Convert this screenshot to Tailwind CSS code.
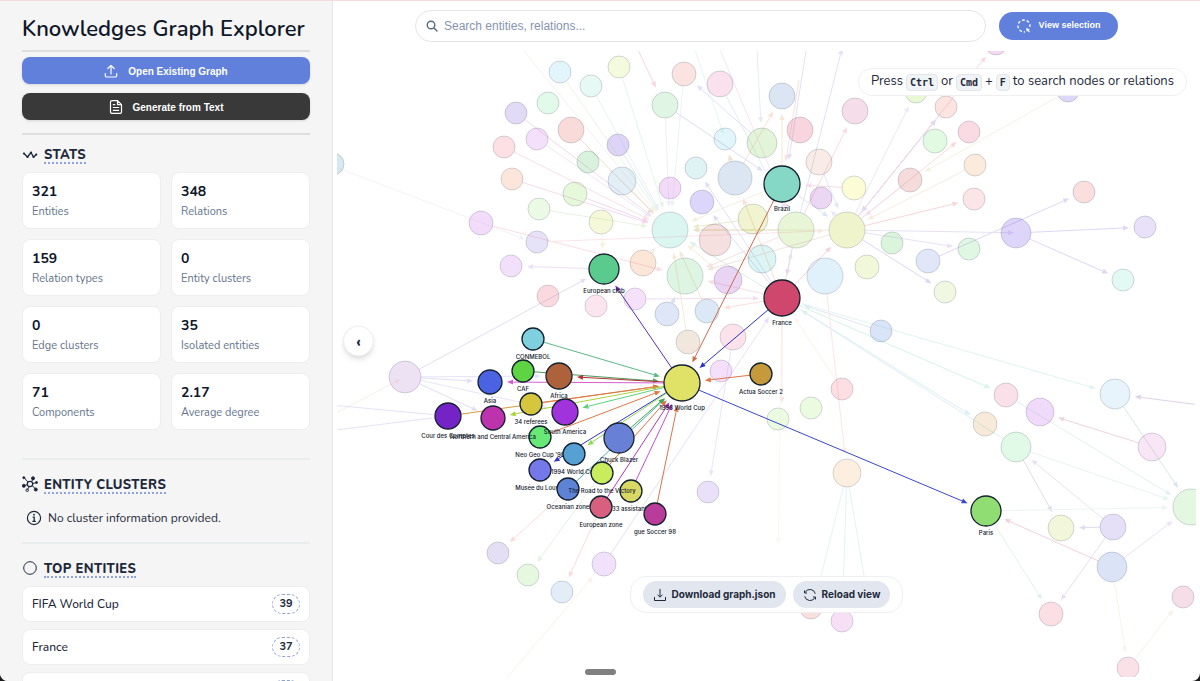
<!DOCTYPE html>
<html lang="en">
<head>
<meta charset="utf-8">
<title>Knowledges Graph Explorer</title>
<script src="https://cdn.jsdelivr.net/npm/@tailwindcss/browser@4"></script>
</head>
<body class="bg-[#1c1c1c]">
<div class="flex h-screen overflow-hidden rounded-b-lg border-t border-[#f3dcdf] bg-white font-['Nunito','Lato',sans-serif] text-[#1e293b]">

  <aside class="w-[333px] shrink-0 overflow-hidden border-r border-[#e6e6e8] bg-[#f5f5f5] px-[22px] pt-3">
    <h1 class="text-[22px] font-semibold leading-8 whitespace-nowrap text-[#0f172a]">Knowledges Graph Explorer</h1>
    <div class="mt-[5px] border-t-2 border-[#dededf]"></div>
    <div class="mt-[5px] flex flex-col gap-[9px] font-['Liberation_Sans',Arial,sans-serif] text-[10px] font-bold text-white">
      <button type="button" class="flex h-[27px] items-center justify-center gap-[10px] rounded-lg bg-[#6080db] pt-px shadow">
        <svg class="size-[14px]" viewBox="1 1 14 14" fill="none" stroke="currentColor" stroke-width="1.2" stroke-linecap="round" stroke-linejoin="round"><path d="M8 11V2.500M4.800 5.500L8 2.300l3.200 3.200M2.300 10.500v2a1.500 1.500 0 0 0 1.500 1.500h8.400a1.500 1.500 0 0 0 1.500-1.500v-2"/></svg>
        Open Existing Graph
      </button>
      <button type="button" class="flex h-[27px] items-center justify-center gap-[10px] rounded-lg bg-[#393939] pt-px shadow">
        <svg class="size-[14px]" viewBox="1 1 14 14" fill="none" stroke="currentColor" stroke-width="1.200" stroke-linecap="round" stroke-linejoin="round"><path d="M9.500 1.600H4A1.500 1.500 0 0 0 2.500 3.100v9.800A1.500 1.500 0 0 0 4 14.400h8a1.500 1.500 0 0 0 1.500-1.500V5.600zM9.500 1.600v4h4M5.300 5.700h1.500M5.300 8.500h5.400M5.300 11.300h5.400"/></svg>
        Generate from Text
      </button>
    </div>
    <div class="mt-[13px] border-t-2 border-[#dededf]"></div>

    <section class="mt-[9px]">
      <h2 class="flex h-5 items-center gap-[6px] text-[13px] font-extrabold">
        <svg class="size-4" viewBox="0 0 16 16" fill="none" stroke="currentColor" stroke-width="1.400" stroke-linecap="round" stroke-linejoin="round"><path d="M2 7.500L5.500 11 9 6.500 11.500 11 14.300 8.500"/><g fill="currentColor" stroke="none"><circle cx="2" cy="7.500" r="1.100"/><circle cx="5.500" cy="11" r="1.100"/><circle cx="9" cy="6.500" r="1.100"/><circle cx="11.500" cy="11" r="1.100"/><circle cx="14.300" cy="8.500" r="1.100"/></g></svg>
        <span class="border-b-2 border-dotted border-[#8fa3dc] pt-[3px] leading-[14px] tracking-wide">STATS</span>
      </h2>
      <dl class="mt-2 grid grid-cols-2 gap-[10px]">
        <div class="flex h-[57px] flex-col justify-center rounded-lg border border-[#eeeef0] bg-white px-[9px] pt-[2px]"><dd class="text-sm leading-5 font-bold text-[#0f172a]">321</dd><dt class="text-[11px] leading-5 text-[#64748b]">Entities</dt></div>
        <div class="flex h-[57px] flex-col justify-center rounded-lg border border-[#eeeef0] bg-white px-[9px] pt-[2px]"><dd class="text-sm leading-5 font-bold text-[#0f172a]">348</dd><dt class="text-[11px] leading-5 text-[#64748b]">Relations</dt></div>
        <div class="flex h-[57px] flex-col justify-center rounded-lg border border-[#eeeef0] bg-white px-[9px] pt-[2px]"><dd class="text-sm leading-5 font-bold text-[#0f172a]">159</dd><dt class="text-[11px] leading-5 text-[#64748b]">Relation types</dt></div>
        <div class="flex h-[57px] flex-col justify-center rounded-lg border border-[#eeeef0] bg-white px-[9px] pt-[2px]"><dd class="text-sm leading-5 font-bold text-[#0f172a]">0</dd><dt class="text-[11px] leading-5 text-[#64748b]">Entity clusters</dt></div>
        <div class="flex h-[57px] flex-col justify-center rounded-lg border border-[#eeeef0] bg-white px-[9px] pt-[2px]"><dd class="text-sm leading-5 font-bold text-[#0f172a]">0</dd><dt class="text-[11px] leading-5 text-[#64748b]">Edge clusters</dt></div>
        <div class="flex h-[57px] flex-col justify-center rounded-lg border border-[#eeeef0] bg-white px-[9px] pt-[2px]"><dd class="text-sm leading-5 font-bold text-[#0f172a]">35</dd><dt class="text-[11px] leading-5 text-[#64748b]">Isolated entities</dt></div>
        <div class="flex h-[57px] flex-col justify-center rounded-lg border border-[#eeeef0] bg-white px-[9px] pt-[2px]"><dd class="text-sm leading-5 font-bold text-[#0f172a]">71</dd><dt class="text-[11px] leading-5 text-[#64748b]">Components</dt></div>
        <div class="flex h-[57px] flex-col justify-center rounded-lg border border-[#eeeef0] bg-white px-[9px] pt-[2px]"><dd class="text-sm leading-5 font-bold text-[#0f172a]">2.17</dd><dt class="text-[11px] leading-5 text-[#64748b]">Average degree</dt></div>
      </dl>
    </section>

    <section class="mt-7 border-t-2 border-[#e9edee] pt-[14px]">
      <h2 class="flex h-5 items-center gap-[6px] text-[13px] font-extrabold">
        <svg class="size-4" viewBox="0 0 16 16" fill="currentColor" stroke="currentColor" stroke-width="1"><circle cx="8" cy="8" r="2.700" fill="none" stroke-width="1.200"/><path d="M6 6L2 1.500M9.500 5.700L11 3M10.700 7.500l4-1M10.300 9.500l3.500 4M7.200 10.600L5.500 13.500M5.400 8.500L2 9.800" fill="none"/><circle cx="1.800" cy="1.700" r="1"/><circle cx="11" cy="2.300" r="1.500"/><circle cx="14.500" cy="6.500" r="1"/><circle cx="13.800" cy="13.500" r="1.500"/><circle cx="5.200" cy="14.200" r="1.300" fill="none"/><circle cx="1.800" cy="9.800" r="1.500"/></svg>
        <span class="border-b-2 border-dotted border-[#8fa3dc] pt-[3px] leading-[14px] tracking-wide">ENTITY CLUSTERS</span>
      </h2>
      <p class="mt-3 flex h-6 items-center gap-[6px] pl-1 text-xs">
        <svg class="size-4" viewBox="0 0 16 16" fill="none" stroke="currentColor" stroke-width="1.200"><circle cx="8" cy="8" r="6.600"/><path d="M6.600 7.200h1.600v4M6.400 11.300h3.400" stroke-width="1.300"/><circle cx="8" cy="4.700" r=".9" fill="currentColor" stroke="none"/></svg>
        No cluster information provided.
      </p>
    </section>

    <section class="mt-3 border-t-2 border-[#e9edee] pt-[14px]">
      <h2 class="flex h-5 items-center gap-[6px] text-[13px] font-extrabold">
        <svg class="size-4" viewBox="0 0 16 16" fill="none" stroke="currentColor" stroke-width="1"><circle cx="8" cy="8" r="6.300"/></svg>
        <span class="border-b-2 border-dotted border-[#8fa3dc] pt-[3px] leading-[14px] tracking-wide">TOP ENTITIES</span>
      </h2>
      <ul class="mt-2 flex flex-col gap-[7px] text-xs font-medium">
        <li class="flex h-9 shrink-0 items-center justify-between rounded-lg border border-[#eeeef0] bg-white px-[9px]">FIFA World Cup <span class="flex h-5 w-7 items-center justify-center rounded-full border border-dashed border-[#8fa3cc] text-[11px] font-bold">39</span></li>
        <li class="flex h-9 shrink-0 items-center justify-between rounded-lg border border-[#eeeef0] bg-white px-[9px]">France <span class="flex h-5 w-7 items-center justify-center rounded-full border border-dashed border-[#8fa3cc] text-[11px] font-bold">37</span></li>
        <li class="flex h-9 shrink-0 items-center justify-between rounded-lg border border-[#eeeef0] bg-white px-[9px]">Brazil <span class="flex h-5 w-7 items-center justify-center rounded-full border border-dashed border-[#8fa3cc] text-[11px] font-bold">30</span></li>
      </ul>
    </section>
  </aside>

  <main class="relative flex min-w-0 flex-1 flex-col justify-between">
    <svg class="absolute inset-0 size-full font-['Inter',sans-serif] text-[6px] font-medium" viewBox="333 1 867 680" role="img" aria-label="Entity graph">
      <clipPath id="stage"><rect x="337" y="51" width="859" height="626"/></clipPath>
      <g clip-path="url(#stage)">
        <g id="faint-nodes" stroke="#334155" stroke-opacity=".2" fill-opacity=".85"></g>
        <g id="faint-edges" opacity=".2"></g>
        <g id="edges"></g>
        <g id="nodes" fill="#0f172a" text-anchor="middle"></g>
      </g>
    </svg>

    <div class="relative flex h-[50px] items-center justify-center gap-[13px]">
      <label class="flex h-8 w-[571px] items-center gap-[6px] rounded-full border border-[#e5e5e8] bg-white px-[10px]">
        <svg class="size-3 shrink-0 text-[#5b6b82]" viewBox="0 0 12 12" fill="none" stroke="currentColor" stroke-width="1.400" stroke-linecap="round"><circle cx="5" cy="5" r="3.800"/><path d="M8 8l3 3"/></svg>
        <input type="search" aria-label="Search" placeholder="Search entities, relations..." class="min-w-0 flex-1 font-['Liberation_Sans',Arial,sans-serif] text-xs outline-none placeholder:text-[#8594b0]">
      </label>
      <button type="button" class="flex h-7 w-[119px] items-center justify-center gap-2 rounded-full bg-[#6080db] font-['Liberation_Sans',Arial,sans-serif] text-[9px] font-bold whitespace-nowrap text-white">
        <svg class="size-[14px] shrink-0" viewBox="0 0 14 14" fill="none" stroke="currentColor" stroke-width="1.300"><path d="M12.900 8A6 6 0 1 0 8 12.900" stroke-dasharray="2.800 2"/><path d="M9 9l4 1.300-1.600.7 1.600 1.700-.7.700-1.700-1.700-.7 1.400z" fill="currentColor" stroke="none"/></svg>
        View selection
      </button>
    </div>

    <p class="absolute top-[67px] right-[13px] flex h-7 items-center gap-[3px] rounded-full border border-[#efeff2] bg-white/95 px-3 text-[13px] whitespace-nowrap">
      Press
      <kbd class="rounded border border-[#e2e5ea] bg-[#f1f4f7] px-[3px] font-['DejaVu_Sans_Mono',monospace] text-[10px] leading-[15px] font-bold">Ctrl</kbd>
      or
      <kbd class="rounded border border-[#e2e5ea] bg-[#f1f4f7] px-[3px] font-['DejaVu_Sans_Mono',monospace] text-[10px] leading-[15px] font-bold">Cmd</kbd>
      +
      <kbd class="rounded border border-[#e2e5ea] bg-[#f1f4f7] px-[3px] font-['DejaVu_Sans_Mono',monospace] text-[10px] leading-[15px] font-bold">F</kbd>
      to search nodes or relations
    </p>

    <button type="button" aria-label="Collapse sidebar" class="absolute top-1/2 left-[10px] flex size-[31px] -translate-y-1/2 items-center justify-center rounded-full border border-[#ededf0] bg-white text-base font-extrabold shadow-md">‹</button>

    <div class="relative flex flex-col items-center">
      <div class="flex h-[37px] items-center gap-[7px] rounded-2xl border border-[#efeff2] bg-white/90 px-3 font-['Inter',sans-serif] text-[10px] font-bold text-[#1e293b]">
        <button type="button" class="flex h-[27px] items-center gap-[5px] rounded-full bg-[#e2e6ee] px-[10px]">
          <svg class="size-[14px]" viewBox="0 0 14 14" fill="none" stroke="currentColor"><path d="M7 1v8M4.500 6.700L7 9.200l2.500-2.500M1.500 9v3.500h11V9"/></svg>
          Download graph.json
        </button>
        <button type="button" class="flex h-[27px] items-center gap-[5px] rounded-full bg-[#e2e6ee] px-[10px]">
          <svg class="size-[14px]" viewBox="0 0 14 14" fill="none" stroke="currentColor"><path d="M2 4.500A5.500 5.500 0 0 1 12.300 5.700M12 9.500A5.500 5.500 0 0 1 1.700 8.300M1.500 2.500v2.500h2.500M12.500 11.500V9H10"/></svg>
          Reload view
        </button>
      </div>
      <div class="mt-14 mr-[333px] mb-[6px] h-[6px] w-[31px] rounded-full bg-[#808080]"></div>
    </div>
  </main>
</div>

<script>
const NS = 'http://www.w3.org/2000/svg';
const layer = id => document.getElementById(id);
function add(parent, tag, attrs, text) {
  const el = document.createElementNS(NS, tag);
  for (const key in attrs) el.setAttribute(key, attrs[key]);
  if (text) el.textContent = text;
  parent.appendChild(el);
}
// Draws a line between two [x, y, radius] points, with an arrowhead short of the target.
function edge(parent, a, b, color) {
  const dx = b[0] - a[0], dy = b[1] - a[1], d = Math.hypot(dx, dy), ux = dx / d, uy = dy / d;
  const tx = b[0] - ux * (b[2] + 5), ty = b[1] - uy * (b[2] + 5);
  const bx = tx - ux * 6, by = ty - uy * 6;
  add(parent, 'path', { d: `M${a[0] + ux * a[2]} ${a[1] + uy * a[2]}L${bx} ${by}`, stroke: color });
  add(parent, 'path', { d: `M${tx} ${ty}L${bx - uy * 2.5} ${by + ux * 2.5}L${bx + uy * 2.5} ${by - ux * 2.5}Z`, fill: color });
}

// x, y, radius, fill
const faint = [
  [560,72,11,'#def5fb'],[591,86,11,'#e2f8f4'],[619,67,11,'#f1fad8'],[548,103,11,'#ddf9e5'],[516,113,11,'#ddd5f5'],[504,147,11,'#fbdadf'],
  [537,139,11,'#f3dafb'],[571,130,13,'#f8d5d2'],[512,179,11,'#fbe3d5'],[588,162,11,'#d2f0d8'],[618,145,11,'#d8cdf7'],[575,194,12,'#e1f7d4'],
  [539,209,11,'#e7f9e0'],[622,181,14,'#deecf6'],[601,222,12,'#f3f8d2'],[481,223,12,'#f0d7f8'],[537,242,11,'#e3def8'],[511,266,11,'#f0dafa'],
  [548,296,11,'#f9d4d9'],[596,306,11,'#fbe0ec'],[635,299,11,'#f5dcfa'],[665,105,13,'#daf3df'],[684,74,12,'#fadedd'],[720,84,13,'#f8dcea'],
  [782,96,13,'#d5e0f1'],[696,168,11,'#d9f1f2'],[725,139,11,'#dcf4fa'],[762,143,15,'#def3d2'],[670,188,11,'#f2d3f8'],[702,202,12,'#d6d0fa'],
  [735,178,17,'#d6e1f0'],[670,230,18,'#d5f5ed'],[715,240,16,'#f5dad9'],[753,219,15,'#eff2c8'],[796,230,18,'#e5f4d1'],[762,259,14,'#d6f3f2'],
  [643,263,13,'#fce2d0'],[685,276,18,'#d8f3de'],[728,280,14,'#e5cdf2'],[667,314,12,'#d9e2f7'],[707,311,12,'#d5e5f5'],[688,342,12,'#f0e3d7'],
  [733,337,13,'#fadde8'],[721,371,11,'#f3d9fa'],[800,130,13,'#f8cfd9'],[855,111,13,'#f5d8e5'],[819,162,13,'#f8e9e1'],[821,198,11,'#e9d0f1'],
  [854,188,12,'#fcfcd1'],[847,230,18,'#eff2c5'],[825,276,18,'#dbeffa'],[867,267,12,'#eff7d4'],[892,243,11,'#d5f5d7'],[910,180,12,'#f3d6d5'],
  [946,107,11,'#fbe0dc'],[935,141,12,'#dcfadc'],[969,132,11,'#f9d5df'],[975,165,11,'#f9e8d6'],[974,199,11,'#fbe0e3'],[916,92,11,'#e5f7ce'],
  [996,44,11,'#f3d2ee'],[1068,91,11,'#d8d1f7'],[1084,192,11,'#f9d9d8'],[1016,233,15,'#d8cef9'],[1145,227,11,'#e4dcf8'],[1123,280,11,'#ddf8f2'],
  [928,261,12,'#dce2f8'],[969,249,11,'#dbf6df'],[945,292,11,'#edf7dd'],[881,331,11,'#d3dff7'],[842,389,11,'#fbd8de'],[811,408,11,'#e6fadb'],
  [778,419,11,'#e8fadd'],[847,473,14,'#fcecdb'],[1006,395,12,'#f9dbe5'],[1040,412,14,'#edd4f8'],[985,424,12,'#f6e6d4'],[1016,447,15,'#dbf9e3'],
  [1115,394,15,'#e4f2fc'],[1152,447,14,'#f7e0f5'],[1191,507,18,'#def6dc'],[1061,528,13,'#f0f5d4'],[1113,527,13,'#e1daf6'],[1112,567,15,'#d5def5'],
  [1051,614,12,'#fbd9df'],[1183,597,11,'#f5d8e5'],[1128,668,11,'#f9dce3'],[708,492,11,'#e6daf8'],[498,553,11,'#dfd9f0'],[528,575,11,'#e2f8db'],
  [562,592,11,'#ddeaf7'],[604,564,12,'#f0dcf9'],[405,377,16,'#eadcf2'],[333,164,11,'#cfe5ef'],[811,608,11,'#f8d9d7'],[842,621,11,'#f6daf3']
];
faint.forEach(([cx, cy, r, fill]) => add(layer('faint-nodes'), 'circle', { cx, cy, r, fill }));

const hubA = [670,230,18], hubB = [847,230,18], hubC = [796,230,18], brazil = [782,184,18], france = [782,298,18], hubD = [685,276,18];
const web = [
  [[516,113,11],hubA,'#a58'],[[504,147,11],hubA,'#d67'],[[512,179,11],hubA,'#b4a'],[[537,139,11],hubA,'#a8c'],[[571,130,13],hubA,'#940'],
  [[575,194,12],hubA,'#b3a'],[[539,209,11],hubA,'#8b6'],[[618,145,11],hubA,'#79c'],[[591,86,11],hubA,'#7bc'],[[619,67,11],hubA,'#7c9'],
  [[560,72,11],hubA,'#8c7'],[[665,105,13],hubA,'#aad'],[[684,74,12],hubA,'#9bd'],[[622,181,14],hubA,'#960'],[[481,223,12],hubD,'#e57'],
  [[537,242,11],hubB,'#e79'],[[601,222,12],[604,269,15],'#cb5'],[[643,263,13],hubA,'#ca6'],[brazil,hubA,'#ca5'],[hubB,hubA,'#9a3'],
  [hubC,hubA,'#960'],[[753,219,15],hubA,'#890'],[france,hubA,'#5a8'],[france,[702,202,12],'#55c'],[[728,280,14],hubA,'#ca4'],
  [[707,311,12],hubA,'#b93'],[[688,342,12],hubA,'#c94'],[france,hubD,'#d66'],[hubC,hubD,'#c76'],[hubB,hubD,'#b76'],
  [france,[707,311,12],'#e65'],[[635,299,11],france,'#c5b'],[france,hubB,'#d24'],[france,hubC,'#6b5'],[hubC,france,'#93c'],
  [[720,84,13],hubC,'#69c'],[[762,143,15],[684,74,12],'#66d'],[[665,105,13],brazil,'#55c'],[[735,178,17],[725,139,11],'#a60'],
  [[735,178,17],[782,96,13],'#d63'],[brazil,[782,96,13],'#d82'],[france,[696,168,11],'#66c'],[france,[735,178,17],'#d62'],
  [brazil,hubB,'#57c'],[hubB,[821,198,11],'#98c'],[[819,162,13],hubB,'#68c'],[[854,188,12],brazil,'#d48'],[[796,230,18],[855,111,13],'#d46'],
  [hubB,[946,107,11],'#42c'],[[946,107,11],hubB,'#42c'],[hubB,[969,132,11],'#d44'],[[910,180,12],hubB,'#b5a'],[[975,165,11],hubB,'#d95'],
  [hubB,[974,199,11],'#d33'],[hubB,[916,92,11],'#98d'],[hubB,[996,44,11],'#d47'],[[1068,91,11],[910,180,12],'#cb6'],[hubC,[846,33,11],'#76c'],
  [hubB,[969,249,11],'#96c'],[hubB,[945,292,11],'#63c'],[[928,261,12],[1084,192,11],'#63c'],[[1016,233,15],[1145,227,11],'#63c'],[[1016,233,15],[1123,280,11],'#63c'],
  [hubB,[1030,233,11],'#86c'],[[881,331,11],france,'#68c'],[[1016,447,15],france,'#5ba'],[france,[1006,395,12],'#3c8'],[france,[985,424,12],'#5ad'],
  [[782,298,18],[1115,394,15],'#6cb'],[france,[778,560,11],'#eda'],[france,[782,419,11],'#d88'],[[825,276,18],[847,473,14],'#e88'],[[842,389,11],france,'#ec9'],
  [[1200,405,5],[1115,394,15],'#628'],[[1152,447,14],[1040,412,14],'#a36'],[[1115,394,15],[1191,507,18],'#48a'],[[1006,395,12],[1191,507,18],'#6bc'],
  [[1016,447,15],[1191,507,18],'#8cb'],[[1016,447,15],[1061,528,13],'#658'],[[1113,527,13],[1061,528,13],'#75b'],[[1113,527,13],[1016,447,15],'#87c'],
  [[1113,527,13],[1051,614,12],'#86a'],[[1112,567,15],[1191,507,18],'#a7c'],[[1112,567,15],[986,511,15],'#b25'],[[986,511,15],[1191,507,18],'#acc'],
  [[986,511,15],[1051,614,12],'#7b9'],[[1128,668,11],[1183,597,11],'#db8'],[[1112,567,15],[1128,668,11],'#dc9'],[[733,337,13],[708,492,11],'#88d'],
  [[604,564,12],france,'#96d'],[[505,680,5],[604,564,12],'#eb9'],[[568,489,11],[498,553,11],'#e55'],[[602,473,11],[528,575,11],'#8b8'],[[601,507,11],[562,592,11],'#d55'],
  [[667,314,12],hubD,'#55b'],[[405,377,16],[604,269,15],'#66b'],[[405,377,16],[490,382,12],'#66d'],[[405,377,16],[559,376,13],'#77d'],[[405,377,16],[493,418,12],'#66c'],
  [[405,377,16],[565,412,13],'#88d'],[[330,416,0],[405,377,0],'#ea8'],[[448,416,13],[320,404,0],'#77d'],[[448,416,13],[320,432,0],'#77d'],[[604,269,15],[511,266,11],'#a6c'],
  [[330,165,0],[540,245,11],'#bbd'],[[847,473,14],[815,600,11],'#7cb'],[[847,473,14],[842,621,11],'#7cb'],[[847,473,14],[868,600,11],'#7cb'],
  [[638,50,0],[658,92,0],'#c35'],[[524,51,0],hubA,'#cb9'],[[695,50,0],[725,139,0],'#8cc'],[[720,50,0],hubC,'#c7b'],[[757,50,0],[762,143,15],'#79d'],[[799,80,0],brazil,'#d66'],[[806,51,0],[788,165,0],'#66c']
];
web.forEach(([a, b, c]) => edge(layer('faint-edges'), a, b, c));

const cup = [682,383,18];
const strong = [
  [[533,339,11],cup,'#5cb888'],[[523,371,11],cup,'#4e9a62'],[cup,[559,376,13],'#b13434'],[cup,[490,382,12],'#d65fd0'],
  [[448,416,13],cup,'#d49b3a'],[[531,404,11],cup,'#e0764d'],[cup,[493,418,12],'#a8d23c'],[cup,[565,412,13],'#5fcf80'],
  [[540,437,11],cup,'#e07848'],[cup,[540,470,11],'#3334c4'],[cup,[574,454,11],'#8bdd4c'],[[568,489,11],cup,'#4fb3b3'],
  [[619,438,15],cup,'#40a84a'],[[602,473,11],cup,'#d97448'],[[601,507,11],cup,'#b438b8'],[[631,491,11],cup,'#c04fd0'],
  [[655,514,11],cup,'#d97450'],[[761,374,11],cup,'#e2764a'],[cup,[604,269,15],'#5a2fb4'],[brazil,cup,'#cb6a4c'],[france,cup,'#2f2fc8'],[cup,[986,511,15],'#3b46cc']
];
strong.forEach(([a, b, c]) => edge(layer('edges'), a, b, c));

// x, y, radius, fill, label; later nodes cover earlier labels
const nodes = [
  [782,184,18,'#84d8c5','Brazil'],[604,269,15,'#5bca8d','European club'],[782,298,18,'#cf476d','France'],[533,339,11,'#7fd0de','CONMEBOL'],
  [523,371,11,'#5ed443','CAF'],[559,376,13,'#ae623c','Africa'],[490,382,12,'#4a63e2','Asia'],[540,437,11,'#68e877','Neo Geo Cup \'98'],
  [531,404,11,'#d5c63e','34 referees'],[448,416,13,'#7424c6','Cour des Comptes'],[493,418,12,'#bd33ae','Northern and Central America'],[565,412,13,'#a033db','South America'],
  [619,438,15,'#6980d7','Chuck Blazer'],[574,454,11,'#57a0d3','1994 World Cup'],[540,470,11,'#7478e8','Musée du Louvre'],[568,489,11,'#5e82d4','Oceanian zone'],
  [631,491,11,'#d9d864','33 assistants'],[602,473,11,'#c8ec5c','The Road to the Victory'],[601,507,11,'#d95f7f','European zone'],[655,514,11,'#b93c9a','gue Soccer 98'],
  [761,374,11,'#c69a3b','Actua Soccer 2'],[682,383,18,'#dfe266','1998 World Cup'],[986,511,15,'#90dd73','Paris']
];
nodes.forEach(([cx, cy, r, fill, label]) => {
  add(layer('nodes'), 'circle', { cx, cy, r, fill, stroke: '#14202e', 'stroke-width': 1.3 });
  add(layer('nodes'), 'text', { x: cx, y: cy + r + 9 }, label);
});
</script>
</body>
</html>
